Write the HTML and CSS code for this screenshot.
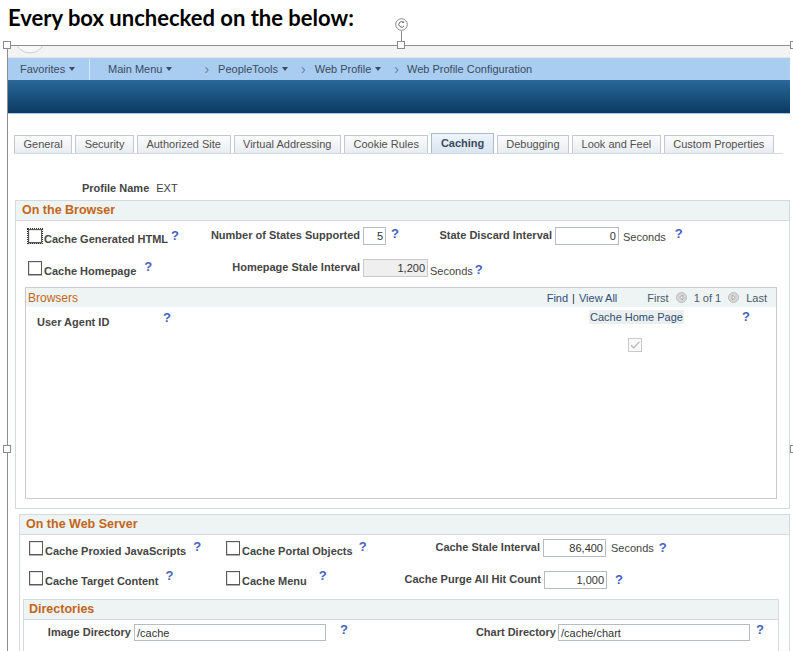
FILE: index.html
```html
<!DOCTYPE html>
<html lang="en">
<head>
<meta charset="utf-8">
<title>Web Profile Configuration - Caching</title>
<link rel="stylesheet" href="styles.css">
</head>
<body>
<h1 class="title">Every box unchecked on the below:</h1>

<div class="shot">
  <div class="strip">
    <svg class="arc" width="60" height="12" viewBox="0 0 60 12"><circle cx="22" cy="-8" r="15" fill="#f7f7f7" stroke="#cfcfcf" stroke-width="1"/></svg>
  </div>
  <nav class="navbar">
    <span class="nav-fav">Favorites<span class="caret"></span></span>
    <span class="nav-sep"></span>
    <span class="nav-main">Main Menu<span class="caret"></span></span>
    <span class="chev chev-1">›</span>
    <span class="crumb">PeopleTools<span class="caret"></span></span>
    <span class="chev">›</span>
    <span class="crumb">Web Profile<span class="caret"></span></span>
    <span class="chev">›</span>
    <span class="crumb crumb-last">Web Profile Configuration</span>
  </nav>
  <div class="banner"></div>

  <div class="content">
    <div class="tabs">
      <span class="tab">General</span>
      <span class="tab">Security</span>
      <span class="tab">Authorized Site</span>
      <span class="tab">Virtual Addressing</span>
      <span class="tab">Cookie Rules</span>
      <span class="tab active">Caching</span>
      <span class="tab">Debugging</span>
      <span class="tab">Look and Feel</span>
      <span class="tab">Custom Properties</span>
    </div>

    <div class="profile"><span class="lbl">Profile Name</span><span class="pval">EXT</span></div>

    <section class="sec sec-browser">
      <div class="sec-head">On the Browser</div>
      <div class="frow b-r1">
        <div class="cbcell bc-a"><span class="cb focus"></span><span class="cblbl">Cache Generated HTML</span><span class="help hb1">?</span></div>
        <span class="flbl bw1">Number of States Supported</span>
        <span class="inp i-states">5</span><span class="help hb2">?</span>
        <span class="flbl bw2">State Discard Interval</span>
        <span class="inp i-disc">0</span><span class="unit u1">Seconds</span><span class="help hb3">?</span>
      </div>
      <div class="frow b-r2">
        <div class="cbcell bc-a"><span class="cb"></span><span class="cblbl">Cache Homepage</span><span class="help hb4">?</span></div>
        <span class="flbl bw1">Homepage Stale Interval</span>
        <span class="inp i-stale disabled">1,200</span><span class="unit u2">Seconds</span><span class="help hb5">?</span>
      </div>

      <div class="grid">
        <div class="ghead">
          <span class="gtitle">Browsers</span>
          <div class="gnav">
            <span class="glink">Find</span><span class="gbar">|</span><span class="glink">View All</span>
            <span class="gfirst">First</span>
            <svg class="navic" width="11" height="11" viewBox="0 0 11 11"><circle cx="5.5" cy="5.5" r="5" fill="#d6d6d6" stroke="#bdbdbd"/><path d="M6.8 3.2 L3.8 5.5 L6.8 7.8 Z" fill="#fafafa" stroke="#8a8a8a" stroke-width="0.6"/></svg>
            <span class="gcount">1 of 1</span>
            <svg class="navic" width="11" height="11" viewBox="0 0 11 11"><circle cx="5.5" cy="5.5" r="5" fill="#d6d6d6" stroke="#bdbdbd"/><path d="M4.2 3.2 L7.2 5.5 L4.2 7.8 Z" fill="#fafafa" stroke="#8a8a8a" stroke-width="0.6"/></svg>
            <span class="glast">Last</span>
          </div>
        </div>
        <div class="gcols">
          <span class="gc-a">User Agent ID</span><span class="help hg1">?</span>
          <span class="gc-b">Cache Home Page</span><span class="help hg2">?</span>
        </div>
        <div class="grow">
          <span class="cb cb-dis"><svg width="12" height="12" viewBox="0 0 12 12"><path d="M2 6.3 L4.8 9 L10.3 2.8" fill="none" stroke="#b4b4b4" stroke-width="1.2"/></svg></span>
        </div>
      </div>
    </section>

    <section class="sec sec-server">
      <div class="sec-head">On the Web Server</div>
      <div class="frow s-r1">
        <div class="cbcell sc-a"><span class="cb"></span><span class="cblbl">Cache Proxied JavaScripts</span><span class="help hs1">?</span></div>
        <div class="cbcell sc-b"><span class="cb"></span><span class="cblbl">Cache Portal Objects</span><span class="help hs2">?</span></div>
        <span class="flbl sw1">Cache Stale Interval</span>
        <span class="inp i-srv">86,400</span><span class="unit u3">Seconds</span><span class="help hs3">?</span>
      </div>
      <div class="frow s-r2">
        <div class="cbcell sc-a"><span class="cb"></span><span class="cblbl">Cache Target Content</span><span class="help hs4">?</span></div>
        <div class="cbcell sc-b"><span class="cb"></span><span class="cblbl">Cache Menu</span><span class="help hs5">?</span></div>
        <span class="flbl sw2">Cache Purge All Hit Count</span>
        <span class="inp i-srv">1,000</span><span class="help hs6">?</span>
      </div>

      <div class="dirs">
        <div class="sec-head dir-head">Directories</div>
        <div class="frow d-r1">
          <span class="flbl dw1">Image Directory</span>
          <span class="inp i-dir">/cache</span><span class="help hd1">?</span>
          <span class="flbl dw2">Chart Directory</span>
          <span class="inp i-dir i-dir2">/cache/chart</span><span class="help hd2">?</span>
        </div>
      </div>
    </section>
  </div>
</div>

<div class="frame">
  <span class="handle h-tl"></span>
  <span class="handle h-tm"></span>
  <span class="handle h-tr"></span>
  <span class="handle h-ml"></span>
  <span class="handle h-mr"></span>
  <span class="rot-stick"></span>
  <svg class="rot" width="13" height="13" viewBox="0 0 13 13"><circle cx="6.5" cy="6.5" r="5.8" fill="#fff" stroke="#8a8a8a"/><path d="M8.8 4.6 A2.8 2.8 0 1 0 9.1 7.8" fill="none" stroke="#666" stroke-width="1"/><path d="M8.2 2.9 L9.3 4.9 L7.1 5.1 Z" fill="#666"/></svg>
</div>
</body>
</html>
```

FILE: styles.css
```css
* { box-sizing: border-box; }
html, body { margin: 0; padding: 0; }
body {
  width: 793px;
  height: 651px;
  overflow: hidden;
  position: relative;
  background: #fff;
  font-family: "Liberation Sans", Arial, sans-serif;
  font-size: 11px;
  color: #404040;
}

.title {
  margin: 0;
  height: 45px;
  padding: 4px 0 0 8px;
  font-family: Lato, "Open Sans", sans-serif;
  font-weight: 700;
  font-size: 22px;
  line-height: 27px;
  color: #000;
}

/* embedded screenshot */
.shot { margin: 1px 0 0 8px; width: 782px; }
.strip { height: 12px; background: #f3f3f3; border-bottom: 1px solid #e2e2e2; overflow: hidden; }
.arc { display: block; }

.navbar {
  height: 22px;
  background: #a9cdf1;
  display: flex;
  align-items: center;
  color: #3b4b60;
  font-size: 11px;
  white-space: nowrap;
}
.nav-fav { width: 81px; padding-left: 12px; }
.nav-sep { width: 1px; height: 21px; background: #d8e8f8; }
.nav-main { margin-left: 18px; }
.caret {
  display: inline-block;
  width: 0; height: 0;
  margin-left: 4px;
  vertical-align: 2px;
  border-left: 3.5px solid transparent;
  border-right: 3.5px solid transparent;
  border-top: 4px solid #3b4b60;
}
.chev { color: #6c8098; font-size: 14px; margin-left: 13px; line-height: 14px; }
.chev-1 { margin-left: 32px; }
.crumb { margin-left: 9px; }
.crumb-last { margin-left: 8px; }

.banner {
  height: 34px;
  background: linear-gradient(#28689a, #0b3a62);
  border-bottom: 1px solid #a4cbef;
}

.content { padding-top: 19px; }

/* tabs */
.tabs {
  display: flex;
  align-items: flex-end;
  gap: 3px;
  margin-left: 6px;
  width: 769px;
  height: 21px;
  border-bottom: 1px solid #cdd9e4;
}
.tab {
  height: 18px;
  padding: 0 8.5px;
  border: 1px solid #c3c9cf;
  border-bottom: 0;
  background: linear-gradient(#fcfcfd, #e8ecf1);
  line-height: 17px;
  color: #505050;
  white-space: nowrap;
}
.tab.active {
  height: 20px;
  line-height: 18px;
  font-weight: 700;
  color: #3a4a5e;
  border-color: #a9bdd2;
  background: linear-gradient(#eef4fa, #d9e5f1);
}

.profile { margin-top: 27px; height: 14px; line-height: 14px; padding-left: 74px; }
.lbl { font-weight: 700; color: #454545; }
.pval { margin-left: 7px; color: #404040; }

/* sections */
.sec { border: 1px solid #d3d9dd; }
.sec-head {
  height: 20px;
  background: #eef3f3;
  border-bottom: 1px solid #d3d9dd;
  color: #c4661a;
  font-weight: 700;
  font-size: 12.5px;
  line-height: 19px;
  padding-left: 6px;
}
.sec-browser { margin: 5px 0 0 7px; width: 775px; padding-bottom: 9px; }
.sec-server { margin-left: 11px; width: 771px; margin-top: 5px; height: 200px; }

.frow { display: flex; align-items: center; height: 24px; white-space: nowrap; }
.b-r1 { margin-top: 3px; }
.b-r2 { margin-top: 8px; }
.s-r1 { margin-top: 1px; }
.s-r2 { margin-top: 6px; }

.cbcell { display: flex; align-items: center; height: 24px; }
.bc-a { width: 189px; padding-left: 12px; }
.sc-a { width: 202px; padding-left: 9px; }
.sc-b { width: 168px; padding-left: 4px; }

.cb {
  display: inline-block;
  flex: none;
  width: 14px;
  height: 14px;
  border: 1px solid #5a5a5a;
  background: #fff;
  box-shadow: inset 1px 1px 0 #e4e4e4, 0 1px 0 #b0b0b0;
}
.cb.focus { outline: 1px dotted #333; outline-offset: 0; }
.cblbl { margin: 6px 0 0 2px; font-weight: 700; color: #454545; }

.help { color: #4562c4; font-weight: 700; font-size: 13px; line-height: 14px; }
.hb1 { margin-left: 3px; }
.hb2 { margin-left: 5px; margin-top: -4px; }
.hb3 { margin-left: 9px; margin-top: -4px; }
.hb4 { margin-left: 8px; margin-top: -2px; }
.hb5 { margin-left: 2px; margin-top: 3px; }

.flbl { font-weight: 700; color: #454545; text-align: right; }
.bw1 { width: 155px; margin-top: -3px; }
.bw2 { width: 153px; margin-top: -3px; }

.inp {
  display: inline-block;
  height: 18px;
  border: 1px solid #b7bcc1;
  background: #fff;
  color: #333;
  line-height: 16px;
  text-align: right;
  padding: 0 2px;
  margin-left: 3px;
}
.inp.disabled { background: #efefef; border-color: #cacaca; }
.i-states { width: 23px; }
.i-disc { width: 64px; }
.i-stale { width: 65px; }
.unit { color: #454545; }
.u1 { margin-left: 4px; margin-top: 1px; }
.u2 { margin-left: 2px; margin-top: 5px; }
.u3 { margin-left: 5px; }

/* browsers grid */
.grid {
  margin: 7px 0 0 9px;
  width: 752px;
  height: 212px;
  border: 1px solid #c9cdd1;
}
.ghead {
  height: 19px;
  background: #eef3f3;
  display: flex;
  align-items: center;
  justify-content: space-between;
  padding: 0 9px 0 2px;
}
.gtitle { color: #c4661a; font-size: 12px; }
.gnav { display: flex; align-items: center; white-space: nowrap; color: #4b5a6a; }
.glink { color: #2f4f7a; }
.gbar { color: #333; margin: 0 4px; }
.gfirst { margin-left: 30px; }
.navic { margin: 0 7px; display: block; }
.gcols { display: flex; align-items: center; height: 23px; white-space: nowrap; }
.gc-a { width: 137px; padding-left: 11px; font-weight: 700; color: #454545; margin-top: 6px; }
.hg1 { margin-top: -2px; }
.gc-b {
  margin-left: 418px;
  background: #eceff0;
  color: #2f4f70;
  height: 14px;
  line-height: 14px;
  padding: 0 1px;
  margin-top: -3px;
}
.hg2 { margin-left: 58px; margin-top: -3px; }
.grow { padding: 8px 0 0 602px; }
.cb-dis { border-color: #c9c9c9; background: #f9f9f9; box-shadow: none; display: block; }
.cb-dis svg { display: block; }

/* web server */
.hs1 { margin-left: 7px; margin-top: -2px; }
.hs2 { margin-left: 6px; margin-top: -2px; }
.hs4 { margin-left: 7px; margin-top: -4px; }
.hs5 { margin-left: 12px; margin-top: -4px; }
.sw1 { width: 150px; margin-top: -2px; }
.sw2 { width: 151px; margin-top: 2px; }
.i-srv { width: 63px; }
.hs3 { margin-left: 5px; }
.hs6 { margin-left: 8px; margin-top: 4px; }
.s-r2 .i-srv { margin-top: 4px; }

/* directories */
.dirs { margin: 9px 0 0 3px; width: 756px; border: 1px solid #d3d9dd; border-bottom: 0; height: 60px; }
.dir-head { padding-left: 5px; }
.d-r1 { margin-top: 2px; height: 20px; }
.dw1 { width: 107px; }
.dw2 { width: 208px; }
.i-dir { width: 192px; height: 17px; text-align: left; padding-left: 2px; }
.i-dir2 { margin-left: 2px; }
.hd1 { margin-left: 14px; margin-top: -5px; }
.hd2 { margin-left: 6px; margin-top: -5px; }

/* selection frame overlay */
.frame {
  position: absolute;
  left: 7px;
  top: 45px;
  width: 788px;
  height: 640px;
  border: 1px solid #8f8f8f;
  pointer-events: none;
}
.handle {
  position: absolute;
  width: 8px;
  height: 8px;
  background: #fff;
  border: 1px solid #8a8a8a;
}
.h-tl { left: -5px; top: -5px; }
.h-tm { left: 389px; top: -5px; }
.h-tr { left: 782px; top: -5px; }
.h-ml { left: -5px; top: 399px; }
.h-mr { left: 782px; top: 399px; }
.rot-stick { position: absolute; left: 393px; top: -15px; width: 1px; height: 11px; background: #8a8a8a; }
.rot { position: absolute; left: 387px; top: -28px; }
```
